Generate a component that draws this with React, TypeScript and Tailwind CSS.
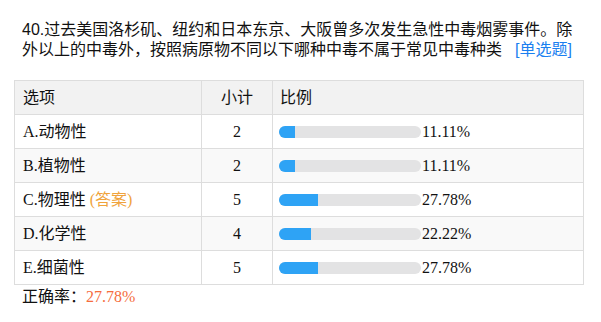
import React from 'react';

interface Row {
  label: string;
  count: number;
  pct: number;
  answer?: boolean;
}

const rows: Row[] = [
  { label: 'A.动物性', count: 2, pct: 11.11 },
  { label: 'B.植物性', count: 2, pct: 11.11 },
  { label: 'C.物理性', count: 5, pct: 27.78, answer: true },
  { label: 'D.化学性', count: 4, pct: 22.22 },
  { label: 'E.细菌性', count: 5, pct: 27.78 },
];

const cjk = "font-['Liberation_Serif','Noto_Sans_CJK_SC',serif]";

export default function App() {
  return (
    <div className="w-[601px] h-[322px] bg-white text-[#111] overflow-hidden">
      <div className="pl-[22px] pr-[18px] pt-[20px] text-[16px] leading-[20px] font-['Liberation_Sans','Noto_Sans_CJK_SC',sans-serif]">
        40.过去美国洛杉矶、纽约和日本东京、大阪曾多次发生急性中毒烟雾事件。除外以上的中毒外，按照病原物不同以下哪种中毒不属于常见中毒种类
        <span className="ml-[13px] text-[#1a7ff0]">[单选题]</span>
      </div>

      <table className={`ml-[14px] mt-[20px] w-[570px] border-collapse text-[16px] ${cjk}`}>
        <thead>
          <tr className="h-[34px] bg-[#f2f2f2]">
            <th className="w-[187px] border border-[#dddddd] pl-[8px] text-left font-normal">选项</th>
            <th className="w-[71px] border border-[#dddddd] text-center font-normal">小计</th>
            <th className="border border-[#dddddd] pl-[7px] text-left font-normal">比例</th>
          </tr>
        </thead>
        <tbody>
          {rows.map((r, i) => (
            <tr key={r.label} className={`h-[34px] ${i % 2 === 1 ? 'bg-[#f9f9f9]' : 'bg-white'}`}>
              <td className="border border-[#dddddd] pl-[8px]">
                {r.label}
                {r.answer && <span className="ml-[4px] text-[#f0a33c]">(答案)</span>}
              </td>
              <td className="border border-[#dddddd] text-center">{r.count}</td>
              <td className="border border-[#dddddd] pl-[6px]">
                <div className="flex items-center">
                  <div className="h-[12px] w-[142px] rounded-full bg-[#e3e3e4] overflow-hidden">
                    <div className="h-full bg-[#2ea3f5]" style={{ width: `${r.pct}%` }} />
                  </div>
                  <span className="ml-[1px]">{r.pct.toFixed(2)}%</span>
                </div>
              </td>
            </tr>
          ))}
        </tbody>
      </table>

      <div className={`pl-[22px] pt-[1px] text-[16px] leading-[22px] ${cjk}`}>
        正确率：<span className="text-[#f56d3d]">27.78%</span>
      </div>
    </div>
  );
}
